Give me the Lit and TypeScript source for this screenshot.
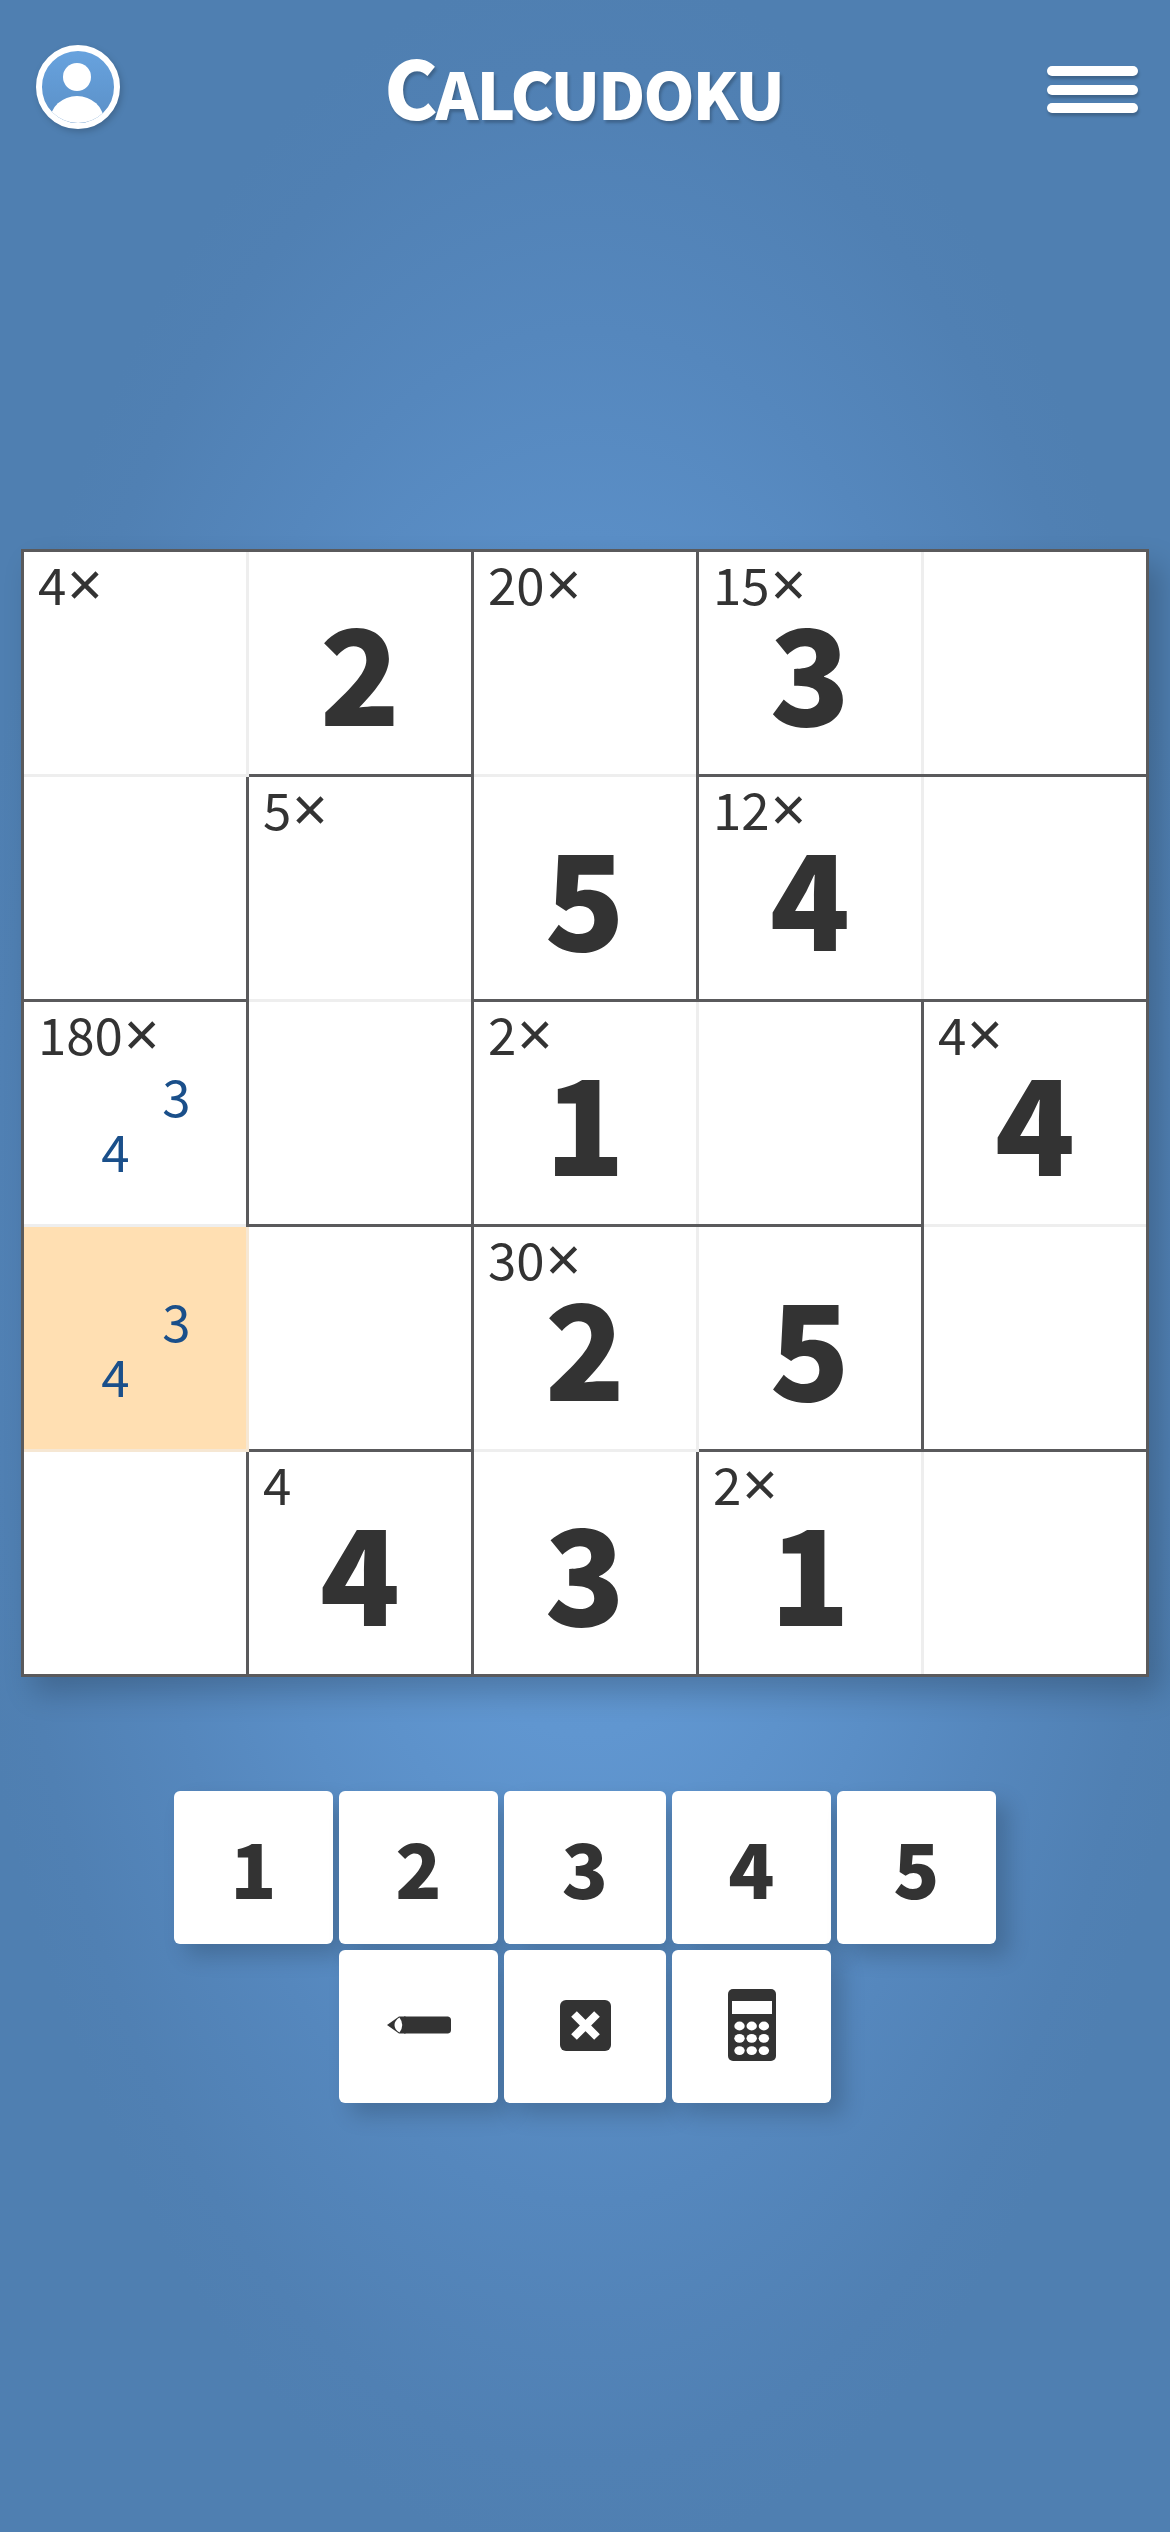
import { LitElement, html, css, svg } from "lit";
import { customElement } from "lit/decorators.js";

const LABELS = [
  ["4×", "", "20×", "15×", ""],
  ["", "5×", "", "12×", ""],
  ["180×", "", "2×", "", "4×"],
  ["", "", "30×", "", ""],
  ["", "4", "", "2×", ""],
];
const VALUES = [
  ["", "2", "", "3", ""],
  ["", "", "5", "4", ""],
  ["p", "", "1", "", "4"],
  ["p", "", "2", "5", ""],
  ["", "4", "3", "1", ""],
];
const RIGHT = ["01101", "11101", "11011", "01011", "11101"];
const BOTTOM = ["01011", "10111", "01110", "01011", "11111"];

const pencilIcon = svg`<svg class="ico" width="64" height="18" viewBox="0 0 64 18"><path fill="#333" d="M0 9 L12 0.5 H61 Q64 1 64 4 V14 Q64 17 61 17.5 H12 Z"/><path fill="#fff" d="M12.5 1.5 Q18 9 12.5 16.5 Q7.5 13.5 7.5 9 Q7.5 4.5 12.5 1.5 Z"/><rect x="17" y="0.5" width="1.6" height="17" fill="#333"/></svg>`;
const clearIcon = svg`<svg class="ico" width="51" height="51" viewBox="0 0 51 51"><rect width="51" height="51" rx="6" fill="#333"/><path d="M14 14 L37 37 M37 14 L14 37" stroke="#fff" stroke-width="8"/></svg>`;
const calcDots = [0, 1, 2].flatMap((r) =>
  [0, 1, 2].map((c) => svg`<ellipse cx="${11.5 + c * 12.2}" cy="${37 + r * 12.3}" rx="5.2" ry="4.4" fill="#fff"/>`)
);
const calcIcon = svg`<svg class="ico" width="48" height="72" viewBox="0 0 48 72"><rect width="48" height="72" rx="5" fill="#333"/><rect x="4" y="12" width="40" height="13" fill="#fff"/>${calcDots}</svg>`;

@customElement("app-root")
export class AppRoot extends LitElement {
  static styles = css`
    :host {
      display: block;
      width: 1170px;
      height: 2532px;
      overflow: hidden;
      font-family: "Noto Sans CJK JP", "Noto Sans", sans-serif;
      color: #333;
      background: radial-gradient(ellipse 640px 1300px at 50% 50%, #659ed9 0%, #6096d0 36%, #5a8ec6 56%, #5587bd 72%, #5080b3 92%, #4f7fb1 100%);
    }
    .top {
      display: grid;
      grid-template-columns: 84px 1fr 91px;
      align-items: start;
      padding: 45px 32px 0 36px;
      height: 504px;
      box-sizing: border-box;
    }
    .avatar { display: block; filter: drop-shadow(2px 3px 3px rgba(0, 0, 0, 0.18)); }
    .title {
      justify-self: center;
      margin: -1px 0 0;
      font-weight: 900;
      color: #fff;
      font-size: 65px;
      letter-spacing: -2px;
      line-height: 82px;
      text-shadow: 2px 3px 3px rgba(0, 0, 0, 0.22);
      white-space: nowrap;
    }
    .title .cap { font-size: 80px; }
    .menu { display: flex; flex-direction: column; gap: 8.5px; padding-top: 21px; }
    .menu i {
      display: block;
      height: 10px;
      border-radius: 5px;
      background: #fff;
      box-shadow: 1px 3px 3px rgba(0, 0, 0, 0.22);
    }
    .board {
      display: grid;
      grid-template-columns: repeat(5, 225px);
      grid-auto-rows: 225px;
      width: 1125px;
      margin-left: 21px;
      box-sizing: content-box;
      border-top: 3px solid #5a5a5c;
      border-left: 3px solid #5a5a5c;
      margin-top: 45px;
      background: #fff;
      box-shadow: 12px 16px 28px rgba(0, 0, 0, 0.2);
    }
    .cell {
      --line: #eee;
      --cage: #5a5a5c;
      display: grid;
      box-sizing: border-box;
      padding: 0 3px 3px 0;
      background: #fff;
      min-width: 0;
      box-shadow: inset -3px 0 var(--line), inset 0 -3px var(--line);
    }
    .cell.r { box-shadow: inset -3px 0 var(--cage), inset 0 -3px var(--line); }
    .cell.b { box-shadow: inset 0 -3px var(--cage), inset -3px 0 var(--line); }
    .cell.r.b { box-shadow: inset -3px 0 var(--cage), inset 0 -3px var(--cage); }
    .cell.active { --line: #f6e7d3; background: #ffdfb2; }
    .cell > * { grid-area: 1 / 1; }
    .label {
      justify-self: start;
      align-self: start;
      padding: 6px 0 0 14px;
      font-size: 51px;
      line-height: 50px;
    }
    .label .x {
      font-family: "Noto Sans", sans-serif;
      font-size: 62px;
      line-height: 0;
      vertical-align: -2px;
      margin-left: 1px;
    }
    .value {
      place-self: center;
      font-weight: 900;
      font-size: 132px;
      line-height: 100px;
      padding-top: 12px;
    }
    .pencil {
      display: grid;
      grid-template-columns: repeat(3, 61px);
      grid-auto-rows: 55px;
      justify-content: start;
      align-content: start;
      padding-top: 66px;
      color: #1a4f8a;
      font-size: 51px;
      line-height: 55px;
      text-align: center;
    }
    .pencil .three { grid-column: 3; grid-row: 1; }
    .pencil .four { grid-column: 2; grid-row: 2; }
    .pad {
      display: grid;
      grid-template-columns: 159px 159px 162px 159px 159px;
      grid-auto-rows: 153px;
      gap: 6px;
      justify-content: center;
      margin-top: 114px;
    }
    .key {
      display: flex;
      align-items: center;
      justify-content: center;
      background: #fff;
      border-radius: 6px;
      box-shadow: 12px 12px 22px rgba(0, 0, 0, 0.18);
      font-weight: 900;
      font-size: 76px;
      line-height: 1;
      padding-bottom: 3px;
      box-sizing: border-box;
    }
    .key.first { grid-column: 2; }
    .ico { display: block; }
  `;

  private label(text: string) {
    if (!text.endsWith("×")) return html`<span class="label">${text}</span>`;
    return html`<span class="label">${text.slice(0, -1)}<span class="x">×</span></span>`;
  }

  private cell(r: number, c: number) {
    const label = LABELS[r][c];
    const value = VALUES[r][c];
    const cls = ["cell"];
    if (RIGHT[r][c] === "1") cls.push("r");
    if (BOTTOM[r][c] === "1") cls.push("b");
    if (r === 3 && c === 0) cls.push("active");
    return html`<div class=${cls.join(" ")}>
      ${label ? this.label(label) : ""}
      ${value === "p"
        ? html`<div class="pencil"><span class="three">3</span><span class="four">4</span></div>`
        : value
        ? html`<span class="value">${value}</span>`
        : ""}
    </div>`;
  }

  render() {
    return html`
      <div class="top">
        <svg class="avatar" width="84" height="84" viewBox="0 0 84 84">
          <defs>
            <linearGradient id="av" x1="0" y1="0" x2="0" y2="1">
              <stop offset="0" stop-color="#68a3df" />
              <stop offset="1" stop-color="#5a8fc6" />
            </linearGradient>
            <clipPath id="avc"><circle cx="42" cy="42" r="36" /></clipPath>
          </defs>
          <circle cx="42" cy="42" r="39" fill="url(#av)" stroke="#fff" stroke-width="6" />
          <circle cx="41" cy="32" r="14" fill="#fff" />
          <g clip-path="url(#avc)"><ellipse cx="41" cy="76" rx="27" ry="25" fill="#fff" /></g>
        </svg>
        <h1 class="title"><span class="cap">C</span>ALCUDOKU</h1>
        <div class="menu"><i></i><i></i><i></i></div>
      </div>
      <div class="board">
        ${LABELS.map((row, r) => row.map((_, c) => this.cell(r, c)))}
      </div>
      <div class="pad">
        ${["1", "2", "3", "4", "5"].map((n) => html`<div class="key">${n}</div>`)}
        <div class="key first">${pencilIcon}</div>
        <div class="key">${clearIcon}</div>
        <div class="key">${calcIcon}</div>
      </div>
    `;
  }
}
